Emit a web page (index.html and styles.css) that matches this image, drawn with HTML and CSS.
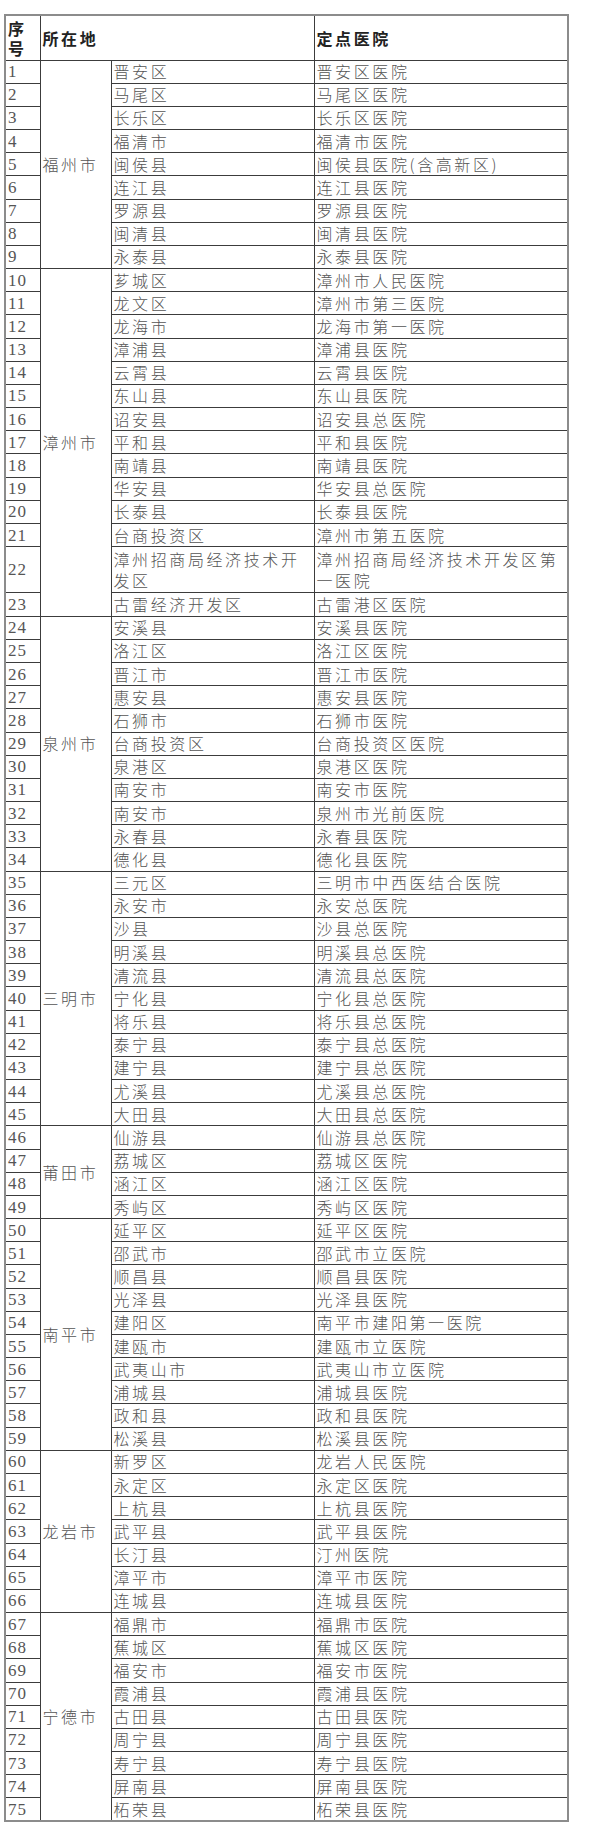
FILE: index.html
```html
<!DOCTYPE html>
<html lang="zh-CN">
<head>
<meta charset="utf-8">
<title>定点医院</title>
<link rel="stylesheet" href="styles.css">
</head>
<body>
<div class="page">
<table class="list">
<colgroup><col class="c-no"><col class="c-city"><col class="c-dist"><col class="c-hosp"></colgroup>
<thead>
<tr class="head"><th class="no">序号</th><th colspan="2">所在地</th><th>定点医院</th></tr>
</thead>
<tbody>
<tr><td class="no">1</td><td class="city" rowspan="9">福州市</td><td>晋安区</td><td>晋安区医院</td></tr>
<tr><td class="no">2</td><td>马尾区</td><td>马尾区医院</td></tr>
<tr><td class="no">3</td><td>长乐区</td><td>长乐区医院</td></tr>
<tr><td class="no">4</td><td>福清市</td><td>福清市医院</td></tr>
<tr><td class="no">5</td><td>闽侯县</td><td>闽侯县医院(含高新区)</td></tr>
<tr><td class="no">6</td><td>连江县</td><td>连江县医院</td></tr>
<tr><td class="no">7</td><td>罗源县</td><td>罗源县医院</td></tr>
<tr><td class="no">8</td><td>闽清县</td><td>闽清县医院</td></tr>
<tr><td class="no">9</td><td>永泰县</td><td>永泰县医院</td></tr>
<tr><td class="no">10</td><td class="city" rowspan="14">漳州市</td><td>芗城区</td><td>漳州市人民医院</td></tr>
<tr><td class="no">11</td><td>龙文区</td><td>漳州市第三医院</td></tr>
<tr><td class="no">12</td><td>龙海市</td><td>龙海市第一医院</td></tr>
<tr><td class="no">13</td><td>漳浦县</td><td>漳浦县医院</td></tr>
<tr><td class="no">14</td><td>云霄县</td><td>云霄县医院</td></tr>
<tr><td class="no">15</td><td>东山县</td><td>东山县医院</td></tr>
<tr><td class="no">16</td><td>诏安县</td><td>诏安县总医院</td></tr>
<tr><td class="no">17</td><td>平和县</td><td>平和县医院</td></tr>
<tr><td class="no">18</td><td>南靖县</td><td>南靖县医院</td></tr>
<tr><td class="no">19</td><td>华安县</td><td>华安县总医院</td></tr>
<tr><td class="no">20</td><td>长泰县</td><td>长泰县医院</td></tr>
<tr><td class="no">21</td><td>台商投资区</td><td>漳州市第五医院</td></tr>
<tr class="tall"><td class="no">22</td><td>漳州招商局经济技术开发区</td><td>漳州招商局经济技术开发区第一医院</td></tr>
<tr><td class="no">23</td><td>古雷经济开发区</td><td>古雷港区医院</td></tr>
<tr><td class="no">24</td><td class="city" rowspan="11">泉州市</td><td>安溪县</td><td>安溪县医院</td></tr>
<tr><td class="no">25</td><td>洛江区</td><td>洛江区医院</td></tr>
<tr><td class="no">26</td><td>晋江市</td><td>晋江市医院</td></tr>
<tr><td class="no">27</td><td>惠安县</td><td>惠安县医院</td></tr>
<tr><td class="no">28</td><td>石狮市</td><td>石狮市医院</td></tr>
<tr><td class="no">29</td><td>台商投资区</td><td>台商投资区医院</td></tr>
<tr><td class="no">30</td><td>泉港区</td><td>泉港区医院</td></tr>
<tr><td class="no">31</td><td>南安市</td><td>南安市医院</td></tr>
<tr><td class="no">32</td><td>南安市</td><td>泉州市光前医院</td></tr>
<tr><td class="no">33</td><td>永春县</td><td>永春县医院</td></tr>
<tr><td class="no">34</td><td>德化县</td><td>德化县医院</td></tr>
<tr><td class="no">35</td><td class="city" rowspan="11">三明市</td><td>三元区</td><td>三明市中西医结合医院</td></tr>
<tr><td class="no">36</td><td>永安市</td><td>永安总医院</td></tr>
<tr><td class="no">37</td><td>沙县</td><td>沙县总医院</td></tr>
<tr><td class="no">38</td><td>明溪县</td><td>明溪县总医院</td></tr>
<tr><td class="no">39</td><td>清流县</td><td>清流县总医院</td></tr>
<tr><td class="no">40</td><td>宁化县</td><td>宁化县总医院</td></tr>
<tr><td class="no">41</td><td>将乐县</td><td>将乐县总医院</td></tr>
<tr><td class="no">42</td><td>泰宁县</td><td>泰宁县总医院</td></tr>
<tr><td class="no">43</td><td>建宁县</td><td>建宁县总医院</td></tr>
<tr><td class="no">44</td><td>尤溪县</td><td>尤溪县总医院</td></tr>
<tr><td class="no">45</td><td>大田县</td><td>大田县总医院</td></tr>
<tr><td class="no">46</td><td class="city" rowspan="4">莆田市</td><td>仙游县</td><td>仙游县总医院</td></tr>
<tr><td class="no">47</td><td>荔城区</td><td>荔城区医院</td></tr>
<tr><td class="no">48</td><td>涵江区</td><td>涵江区医院</td></tr>
<tr><td class="no">49</td><td>秀屿区</td><td>秀屿区医院</td></tr>
<tr><td class="no">50</td><td class="city" rowspan="10">南平市</td><td>延平区</td><td>延平区医院</td></tr>
<tr><td class="no">51</td><td>邵武市</td><td>邵武市立医院</td></tr>
<tr><td class="no">52</td><td>顺昌县</td><td>顺昌县医院</td></tr>
<tr><td class="no">53</td><td>光泽县</td><td>光泽县医院</td></tr>
<tr><td class="no">54</td><td>建阳区</td><td>南平市建阳第一医院</td></tr>
<tr><td class="no">55</td><td>建瓯市</td><td>建瓯市立医院</td></tr>
<tr><td class="no">56</td><td>武夷山市</td><td>武夷山市立医院</td></tr>
<tr><td class="no">57</td><td>浦城县</td><td>浦城县医院</td></tr>
<tr><td class="no">58</td><td>政和县</td><td>政和县医院</td></tr>
<tr><td class="no">59</td><td>松溪县</td><td>松溪县医院</td></tr>
<tr><td class="no">60</td><td class="city" rowspan="7">龙岩市</td><td>新罗区</td><td>龙岩人民医院</td></tr>
<tr><td class="no">61</td><td>永定区</td><td>永定区医院</td></tr>
<tr><td class="no">62</td><td>上杭县</td><td>上杭县医院</td></tr>
<tr><td class="no">63</td><td>武平县</td><td>武平县医院</td></tr>
<tr><td class="no">64</td><td>长汀县</td><td>汀州医院</td></tr>
<tr><td class="no">65</td><td>漳平市</td><td>漳平市医院</td></tr>
<tr><td class="no">66</td><td>连城县</td><td>连城县医院</td></tr>
<tr><td class="no">67</td><td class="city" rowspan="9">宁德市</td><td>福鼎市</td><td>福鼎市医院</td></tr>
<tr><td class="no">68</td><td>蕉城区</td><td>蕉城区医院</td></tr>
<tr><td class="no">69</td><td>福安市</td><td>福安市医院</td></tr>
<tr><td class="no">70</td><td>霞浦县</td><td>霞浦县医院</td></tr>
<tr><td class="no">71</td><td>古田县</td><td>古田县医院</td></tr>
<tr><td class="no">72</td><td>周宁县</td><td>周宁县医院</td></tr>
<tr><td class="no">73</td><td>寿宁县</td><td>寿宁县医院</td></tr>
<tr><td class="no">74</td><td>屏南县</td><td>屏南县医院</td></tr>
<tr><td class="no">75</td><td>柘荣县</td><td>柘荣县医院</td></tr>
</tbody>
</table>
</div>
</body>
</html>
```

FILE: styles.css
```css
html, body {
  margin: 0;
  padding: 0;
  background: #ffffff;
}

.page {
  padding: 14px 0 0 4px;
}

.list {
  border-collapse: collapse;
  table-layout: fixed;
  width: 563px;
  font-family: "Noto Sans CJK SC", "Liberation Serif", serif;
  font-weight: 300;
  font-size: 16px;
  letter-spacing: 2.6px;
  color: #555;
  border: 2px solid #8c8c8c;
}

.c-no { width: 35px; }
.c-city { width: 71px; }
.c-dist { width: 203px; }
.c-hosp { width: 254px; }

.list th,
.list td {
  border: 1px solid #3c3c3c;
  padding: 0 0 0 2px;
  text-align: left;
  vertical-align: middle;
  line-height: 21px;
  overflow: hidden;
}

.list tr { height: 23.18px; }
.list tr.tall { height: 46.36px; }

.list .head { height: 45px; }
.list .head th {
  font-weight: 700;
  color: #222;
  line-height: 20px;
}

.list td.no {
  font-family: "Liberation Serif", serif;
  font-weight: 400;
  font-size: 17px;
  letter-spacing: 1px;
  color: #555;
}

.list td.city {
  vertical-align: middle;
}
```
